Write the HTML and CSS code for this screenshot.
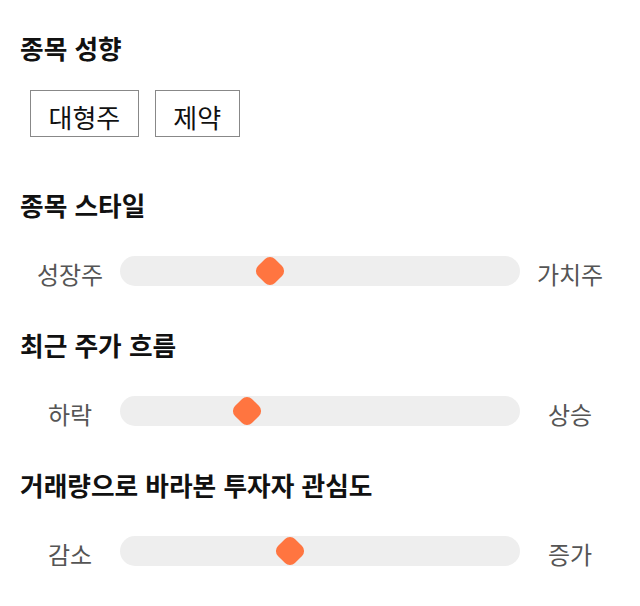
FILE: index.html
```html
<!DOCTYPE html>
<html lang="ko">
  <head>
    <meta charset="UTF-8" />
    <meta name="viewport" content="width=device-width, initial-scale=1.0" />
    <title>종목 분석</title>
    <link rel="stylesheet" href="styles.css">
  </head>
  <body>
    <!-- 종목 성향 -->
    <section class="group">
      <h2>종목 성향</h2>
      <div class="tags">
        <span class="tag">대형주</span>
        <span class="tag">제약</span>
      </div>
    </section>

    <section class="group">
      <h2>종목 스타일</h2>
      <div class="scale">
        <span class="label">성장주</span>
        <div class="track">
          <span class="thumb" style="left: 37.6%"></span>
        </div>
        <span class="label">가치주</span>
      </div>
    </section>

    <section class="group">
      <h2>최근 주가 흐름</h2>
      <div class="scale">
        <span class="label">하락</span>
        <div class="track">
          <span class="thumb" style="left: 31.75%"></span>
        </div>
        <span class="label">상승</span>
      </div>
    </section>

    <section class="group">
      <h2>거래량으로 바라본 투자자 관심도</h2>
      <div class="scale">
        <span class="label">감소</span>
        <div class="track">
          <span class="thumb" style="left: 42.6%"></span>
        </div>
        <span class="label">증가</span>
      </div>
    </section>
  </body>
</html>
```

FILE: styles.css
```css
:root {
  --accent: #ff7540;
  --track: #eeeeee;
}

* {
  margin: 0;
  padding: 0;
  box-sizing: border-box;
  font-family: "Noto Sans CJK KR", "Noto Sans", sans-serif;
}

body {
  padding: 31px 20px 10px;
  background: white;
  color: #111;
}

.group {
  margin-bottom: 42px;
}

.group:first-child {
  margin-bottom: 51px;
}

.group:last-child {
  margin-bottom: 0;
}

.group h2 {
  font-size: 25.7px;
  font-weight: bold;
  line-height: 34px;
  margin-bottom: 34px;
}

.group:first-child h2 {
  margin-bottom: 25px;
}

.tags {
  display: flex;
  gap: 16px;
  padding-left: 10px;
}

.tag {
  display: flex;
  align-items: center;
  height: 47px;
  padding: 6px 17.5px 0;
  border: 1px solid #888;
  font-size: 26px;
  color: #111;
}

/* 슬라이더 */
.scale {
  display: flex;
  align-items: center;
  height: 30px;
}

.label {
  width: 100px;
  text-align: center;
  font-size: 24px;
  line-height: 32px;
  padding-top: 6px;
  color: #555;
}

.track {
  position: relative;
  flex: 1;
  height: 30px;
  background: var(--track);
  border-radius: 15px;
}

.thumb {
  position: absolute;
  top: 50%;
  width: 24px;
  height: 24px;
  background: var(--accent);
  border-radius: 7px;
  transform: translate(-50%, -50%) rotate(45deg);
}
```
